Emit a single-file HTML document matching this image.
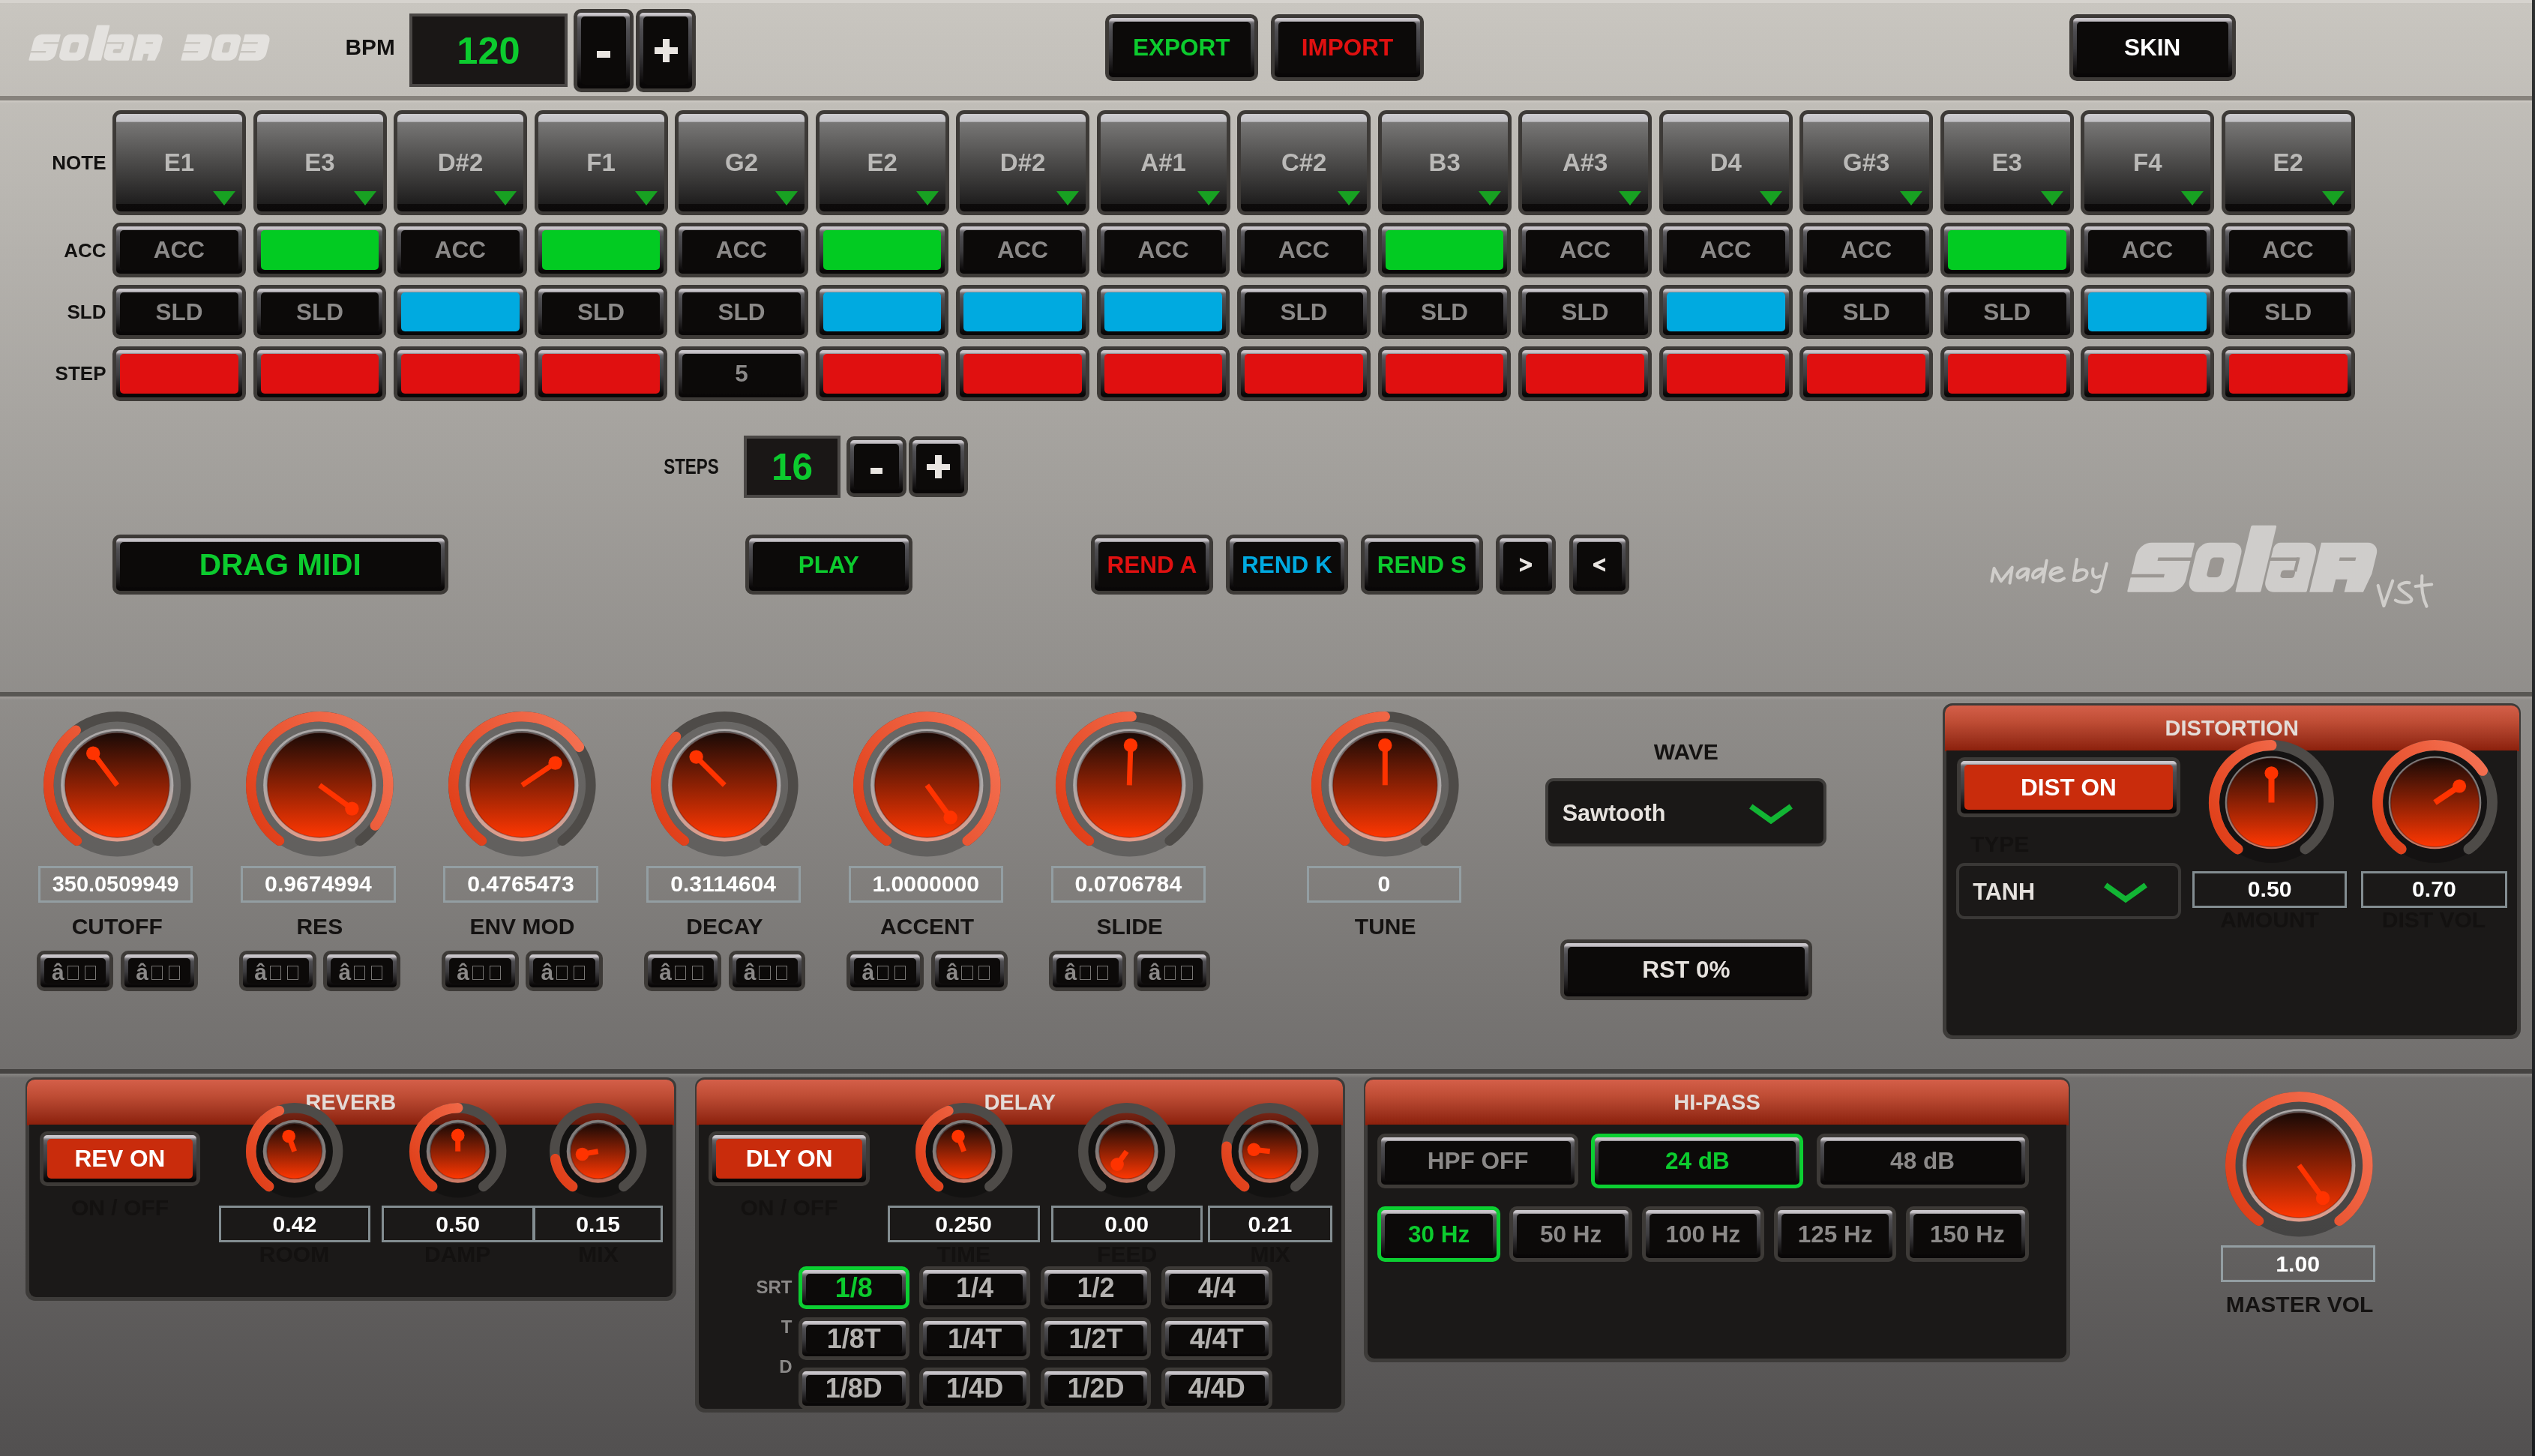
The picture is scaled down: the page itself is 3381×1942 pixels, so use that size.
<!DOCTYPE html><html><head><meta charset="utf-8"><title>solar 303</title><style>
*{margin:0;padding:0;box-sizing:border-box}
html,body{width:3381px;height:1942px;overflow:hidden;background:#525050}
body{font-family:"Liberation Sans",sans-serif;font-weight:bold;position:relative;
background:linear-gradient(180deg,#c9c6c0 0,#525050 100%)}
.a{position:absolute}
.sep{position:absolute;left:0;width:3377px}
.b{position:absolute;border:5px solid #3d3a37;border-radius:10px;
background:linear-gradient(180deg,#cdcacf 0,#c6c2c7 3.3px,#8a878b 5px,#656468 7px,#4e4d51 22%,#3d3c3f 52%,#1b191a 80%,#090707 94%)}
.b>i{position:absolute;left:5px;top:5px;right:5px;bottom:5px;border-radius:5px;background:#0c0a09;
display:flex;align-items:center;justify-content:center;font-style:normal;font-size:31.5px;color:#8b8988;white-space:nowrap;padding-top:1px}
.b.on{border-color:#0ccf32}
.n{position:absolute;width:178px;height:140.4px;top:147px;border:5.5px solid #3d3a37;border-radius:11px;
background:linear-gradient(180deg,#cdccd0 0,#c2c1c5 10px,#777675 11.5px,#4b4a49 50%,#1f1e1e 92%,#0d0b0b 92.6%,#0b0909 100%);
display:flex;align-items:center;justify-content:center;font-size:33px;color:#bab9b7}
.n:after{content:"";position:absolute;left:129px;top:102.8px;border-left:15.3px solid transparent;border-right:15.3px solid transparent;border-top:19.5px solid #18a122}
.l{position:absolute;color:#121110;font-size:26px;white-space:nowrap;line-height:30px;height:30px}
.lc{position:absolute;color:#141211;font-size:30px;white-space:nowrap;line-height:34px;height:34px;text-align:center}
.d{position:absolute;border:4px solid #4a4745;background:#1a1716;color:#0ccb2e;display:flex;align-items:center;justify-content:center}
.v{position:absolute;border:3.5px solid #939ea2;color:#fff;font-size:30.2px;display:flex;align-items:center;justify-content:center;height:48.5px}
.p{position:absolute;background:#3d3b39;border-radius:13px}
.p>.h{position:absolute;left:2.5px;right:2.5px;top:2.5px;height:61px;border-radius:10.5px 10.5px 0 0;
background:linear-gradient(180deg,#d45f49 0,#bf4d35 35%,#a33722 68%,#8b1f0b 100%);color:#e4dcd8;font-size:29px;text-align:center;line-height:60px}
.p>.y{position:absolute;left:5px;right:5px;bottom:5px;top:63px;border-radius:0 0 9px 9px;background:#1b1918}
.k{position:absolute;overflow:visible}
.c{position:absolute;border:4px solid #3e3c3a;border-radius:11px;background:#1a1817;color:#e6e2de;font-size:30.6px;line-height:1}
</style></head><body><svg width="0" height="0" style="position:absolute"><defs><linearGradient id="ga98l" gradientUnits="userSpaceOnUse" x1="-78.64" y1="58.98" x2="78.64" y2="-58.98"><stop offset="0" stop-color="#e03f19"/><stop offset="1" stop-color="#f47051"/></linearGradient><linearGradient id="gf98l" gradientUnits="userSpaceOnUse" x1="0" y1="-69.6" x2="0" y2="69.6"><stop offset="0" stop-color="#1a0a06"/><stop offset="1" stop-color="#ff3702"/></linearGradient><linearGradient id="gr98l" gradientUnits="userSpaceOnUse" x1="0" y1="-75.1" x2="0" y2="75.1"><stop offset="0" stop-color="#aca8a8"/><stop offset="0.5" stop-color="#aca8a8"/><stop offset="1" stop-color="#e29c8a"/></linearGradient><linearGradient id="gs98l" gradientUnits="userSpaceOnUse" x1="0" y1="-69.6" x2="0" y2="69.6"><stop offset="0" stop-color="#625e5e"/><stop offset="0.6" stop-color="#625e5e" stop-opacity="0"/></linearGradient><linearGradient id="ga83d" gradientUnits="userSpaceOnUse" x1="-66.8" y1="50.1" x2="66.8" y2="-50.1"><stop offset="0" stop-color="#e03f19"/><stop offset="1" stop-color="#f47051"/></linearGradient><linearGradient id="gf83d" gradientUnits="userSpaceOnUse" x1="0" y1="-59" x2="0" y2="59"><stop offset="0" stop-color="#1a0a06"/><stop offset="1" stop-color="#ff3702"/></linearGradient><linearGradient id="gr83d" gradientUnits="userSpaceOnUse" x1="0" y1="-61.8" x2="0" y2="61.8"><stop offset="0" stop-color="#807c7b"/><stop offset="0.5" stop-color="#807c7b"/><stop offset="1" stop-color="#d07a64"/></linearGradient><linearGradient id="gs83d" gradientUnits="userSpaceOnUse" x1="0" y1="-59" x2="0" y2="59"><stop offset="0" stop-color="#3a3636"/><stop offset="0.6" stop-color="#3a3636" stop-opacity="0"/></linearGradient><linearGradient id="ga64d" gradientUnits="userSpaceOnUse" x1="-51.76" y1="38.82" x2="51.76" y2="-38.82"><stop offset="0" stop-color="#e03f19"/><stop offset="1" stop-color="#f47051"/></linearGradient><linearGradient id="gf64d" gradientUnits="userSpaceOnUse" x1="0" y1="-36.6" x2="0" y2="36.6"><stop offset="0" stop-color="#1a0a06"/><stop offset="1" stop-color="#ff3702"/></linearGradient><linearGradient id="gr64d" gradientUnits="userSpaceOnUse" x1="0" y1="-42" x2="0" y2="42"><stop offset="0" stop-color="#807c7b"/><stop offset="0.5" stop-color="#807c7b"/><stop offset="1" stop-color="#d07a64"/></linearGradient><linearGradient id="gs64d" gradientUnits="userSpaceOnUse" x1="0" y1="-36.6" x2="0" y2="36.6"><stop offset="0" stop-color="#3a3636"/><stop offset="0.6" stop-color="#3a3636" stop-opacity="0"/></linearGradient></defs></svg><div id="w" style="position:absolute;left:0;top:0;width:3381px;height:1942px;will-change:transform"><div class="a" style="left:0;top:0;width:3377px;height:4px;background:#d6d3ce"></div><div class="a" style="left:3377px;top:0;width:4px;height:1942px;background:linear-gradient(180deg,#2f3131 0,#1b1d20 100%)"></div><div class="sep" style="top:128px;height:6px;background:#86827c"></div><div class="sep" style="top:134px;height:4px;background:linear-gradient(180deg,#cecbc5,#cecbc500)"></div><div class="sep" style="top:923px;height:6px;background:#595753"></div><div class="sep" style="top:929px;height:5px;background:linear-gradient(180deg,#a29e9a,#a29e9a00)"></div><div class="sep" style="top:1426px;height:6px;background:#454341"></div><div class="sep" style="top:1432px;height:6px;background:linear-gradient(180deg,#888684,#88868400)"></div><div class="l" style="left:460.6px;top:48px;font-size:29.8px;line-height:30px">BPM</div><div class="d" style="left:546px;top:18px;width:211px;height:98px;font-size:50.5px">120</div><div class="b" style="left:765px;top:12px;width:80px;height:110.5px"><i><s style="display:block;width:17.5px;height:9px;background:#e9e5e1;margin-top:10px"></s></i></div><div class="b" style="left:848px;top:12px;width:80px;height:110.5px"><i><s style="display:block;position:relative;width:31px;height:31px"><s style="position:absolute;left:0;top:11.0px;width:31px;height:9px;background:#e9e5e1"></s><s style="position:absolute;top:0;left:11.0px;height:31px;width:9px;background:#e9e5e1"></s></s></i></div><div class="b" style="left:1473.7px;top:19px;width:204px;height:88.5px"><i style="color:#0ccb2e;">EXPORT</i></div><div class="b" style="left:1695px;top:19px;width:204px;height:88.5px"><i style="color:#e01010;">IMPORT</i></div><div class="b" style="left:2759.5px;top:19px;width:222.5px;height:88.5px"><i style="color:#fff;">SKIN</i></div><div class="l" style="right:3239.5px;top:202px">NOTE</div><div class="l" style="right:3239.5px;top:318.5px">ACC</div><div class="l" style="right:3239.5px;top:401px">SLD</div><div class="l" style="right:3239.5px;top:483.3px">STEP</div><div class="n" style="left:150px">E1</div><div class="n" style="left:337.52px">E3</div><div class="n" style="left:525.04px">D#2</div><div class="n" style="left:712.56px">F1</div><div class="n" style="left:900.08px">G2</div><div class="n" style="left:1087.6px">E2</div><div class="n" style="left:1275.12px">D#2</div><div class="n" style="left:1462.64px">A#1</div><div class="n" style="left:1650.16px">C#2</div><div class="n" style="left:1837.68px">B3</div><div class="n" style="left:2025.2px">A#3</div><div class="n" style="left:2212.72px">D4</div><div class="n" style="left:2400.24px">G#3</div><div class="n" style="left:2587.76px">E3</div><div class="n" style="left:2775.28px">F4</div><div class="n" style="left:2962.8px">E2</div><div class="b" style="left:150px;top:297.2px;width:177.8px;height:72.6px"><i>ACC</i></div><div class="b" style="left:150px;top:379.7px;width:177.8px;height:72.6px"><i>SLD</i></div><div class="b" style="left:150px;top:462.1px;width:177.8px;height:72.6px"><i style="background:#e01010;"></i></div><div class="b" style="left:337.52px;top:297.2px;width:177.8px;height:72.6px"><i style="background:#02cb22;"></i></div><div class="b" style="left:337.52px;top:379.7px;width:177.8px;height:72.6px"><i>SLD</i></div><div class="b" style="left:337.52px;top:462.1px;width:177.8px;height:72.6px"><i style="background:#e01010;"></i></div><div class="b" style="left:525.04px;top:297.2px;width:177.8px;height:72.6px"><i>ACC</i></div><div class="b" style="left:525.04px;top:379.7px;width:177.8px;height:72.6px"><i style="background:#00aae0;"></i></div><div class="b" style="left:525.04px;top:462.1px;width:177.8px;height:72.6px"><i style="background:#e01010;"></i></div><div class="b" style="left:712.56px;top:297.2px;width:177.8px;height:72.6px"><i style="background:#02cb22;"></i></div><div class="b" style="left:712.56px;top:379.7px;width:177.8px;height:72.6px"><i>SLD</i></div><div class="b" style="left:712.56px;top:462.1px;width:177.8px;height:72.6px"><i style="background:#e01010;"></i></div><div class="b" style="left:900.08px;top:297.2px;width:177.8px;height:72.6px"><i>ACC</i></div><div class="b" style="left:900.08px;top:379.7px;width:177.8px;height:72.6px"><i>SLD</i></div><div class="b" style="left:900.08px;top:462.1px;width:177.8px;height:72.6px"><i>5</i></div><div class="b" style="left:1087.6px;top:297.2px;width:177.8px;height:72.6px"><i style="background:#02cb22;"></i></div><div class="b" style="left:1087.6px;top:379.7px;width:177.8px;height:72.6px"><i style="background:#00aae0;"></i></div><div class="b" style="left:1087.6px;top:462.1px;width:177.8px;height:72.6px"><i style="background:#e01010;"></i></div><div class="b" style="left:1275.12px;top:297.2px;width:177.8px;height:72.6px"><i>ACC</i></div><div class="b" style="left:1275.12px;top:379.7px;width:177.8px;height:72.6px"><i style="background:#00aae0;"></i></div><div class="b" style="left:1275.12px;top:462.1px;width:177.8px;height:72.6px"><i style="background:#e01010;"></i></div><div class="b" style="left:1462.64px;top:297.2px;width:177.8px;height:72.6px"><i>ACC</i></div><div class="b" style="left:1462.64px;top:379.7px;width:177.8px;height:72.6px"><i style="background:#00aae0;"></i></div><div class="b" style="left:1462.64px;top:462.1px;width:177.8px;height:72.6px"><i style="background:#e01010;"></i></div><div class="b" style="left:1650.16px;top:297.2px;width:177.8px;height:72.6px"><i>ACC</i></div><div class="b" style="left:1650.16px;top:379.7px;width:177.8px;height:72.6px"><i>SLD</i></div><div class="b" style="left:1650.16px;top:462.1px;width:177.8px;height:72.6px"><i style="background:#e01010;"></i></div><div class="b" style="left:1837.68px;top:297.2px;width:177.8px;height:72.6px"><i style="background:#02cb22;"></i></div><div class="b" style="left:1837.68px;top:379.7px;width:177.8px;height:72.6px"><i>SLD</i></div><div class="b" style="left:1837.68px;top:462.1px;width:177.8px;height:72.6px"><i style="background:#e01010;"></i></div><div class="b" style="left:2025.2px;top:297.2px;width:177.8px;height:72.6px"><i>ACC</i></div><div class="b" style="left:2025.2px;top:379.7px;width:177.8px;height:72.6px"><i>SLD</i></div><div class="b" style="left:2025.2px;top:462.1px;width:177.8px;height:72.6px"><i style="background:#e01010;"></i></div><div class="b" style="left:2212.72px;top:297.2px;width:177.8px;height:72.6px"><i>ACC</i></div><div class="b" style="left:2212.72px;top:379.7px;width:177.8px;height:72.6px"><i style="background:#00aae0;"></i></div><div class="b" style="left:2212.72px;top:462.1px;width:177.8px;height:72.6px"><i style="background:#e01010;"></i></div><div class="b" style="left:2400.24px;top:297.2px;width:177.8px;height:72.6px"><i>ACC</i></div><div class="b" style="left:2400.24px;top:379.7px;width:177.8px;height:72.6px"><i>SLD</i></div><div class="b" style="left:2400.24px;top:462.1px;width:177.8px;height:72.6px"><i style="background:#e01010;"></i></div><div class="b" style="left:2587.76px;top:297.2px;width:177.8px;height:72.6px"><i style="background:#02cb22;"></i></div><div class="b" style="left:2587.76px;top:379.7px;width:177.8px;height:72.6px"><i>SLD</i></div><div class="b" style="left:2587.76px;top:462.1px;width:177.8px;height:72.6px"><i style="background:#e01010;"></i></div><div class="b" style="left:2775.28px;top:297.2px;width:177.8px;height:72.6px"><i>ACC</i></div><div class="b" style="left:2775.28px;top:379.7px;width:177.8px;height:72.6px"><i style="background:#00aae0;"></i></div><div class="b" style="left:2775.28px;top:462.1px;width:177.8px;height:72.6px"><i style="background:#e01010;"></i></div><div class="b" style="left:2962.8px;top:297.2px;width:177.8px;height:72.6px"><i>ACC</i></div><div class="b" style="left:2962.8px;top:379.7px;width:177.8px;height:72.6px"><i>SLD</i></div><div class="b" style="left:2962.8px;top:462.1px;width:177.8px;height:72.6px"><i style="background:#e01010;"></i></div><div class="l" style="left:872.5px;top:606.5px;font-size:29px;width:98px;text-align:center;transform:scaleX(.775)">STEPS</div><div class="d" style="left:992px;top:581.2px;width:129px;height:82.6px;font-size:49.5px">16</div><div class="b" style="left:1129px;top:582px;width:79.5px;height:80.5px"><i><s style="display:block;width:16.5px;height:8.5px;background:#e9e5e1;margin-top:10px"></s></i></div><div class="b" style="left:1211.7px;top:582px;width:79.8px;height:80.5px"><i><s style="display:block;position:relative;width:31px;height:31px"><s style="position:absolute;left:0;top:11.25px;width:31px;height:8.5px;background:#e9e5e1"></s><s style="position:absolute;top:0;left:11.25px;height:31px;width:8.5px;background:#e9e5e1"></s></s></i></div><div class="b" style="left:149.5px;top:713.3px;width:448.5px;height:80.2px"><i style="color:#0ccb2e;font-size:40.5px;">DRAG MIDI</i></div><div class="b" style="left:993.9px;top:713.3px;width:222.7px;height:80.2px"><i style="color:#0ccb2e;">PLAY</i></div><div class="b" style="left:1455px;top:713.3px;width:162.8px;height:80.2px"><i style="color:#e01010;">REND A</i></div><div class="b" style="left:1634.9px;top:713.3px;width:162.8px;height:80.2px"><i style="color:#00aae0;">REND K</i></div><div class="b" style="left:1814.8px;top:713.3px;width:162.8px;height:80.2px"><i style="color:#0ccb2e;">REND S</i></div><div class="b" style="left:1994.6px;top:713.3px;width:80.4px;height:80.2px"><i style="padding-top:0px;"><svg width="16.5" height="18.7" viewBox="0 0 16.5 18.7" style="display:block"><path d="M0 0L16.5 7.4V11.3L0 18.7V14.3L10.4 9.35L0 4.4Z" fill="#e9e5e1"/></svg></i></div><div class="b" style="left:2092.7px;top:713.3px;width:80.4px;height:80.2px"><i style="padding-top:0px;"><svg width="16.5" height="18.7" viewBox="0 0 16.5 18.7" style="display:block"><path d="M16.5 0L0 7.4V11.3L16.5 18.7V14.3L6.1 9.35L16.5 4.4Z" fill="#e9e5e1"/></svg></i></div><svg class="k" style="left:55.9px;top:947.3px" width="200.6" height="200.6" viewBox="-100.3 -100.3 200.6 200.6"><circle r="95.3" fill="rgba(0,0,0,0.255)"/><path d="M-53.81 74.07A91.55 91.55 0 1 1 53.81 74.07" fill="none" stroke="#4e4b48" stroke-width="13.5" stroke-linecap="round"/><path d="M-53.81 74.07A91.55 91.55 0 0 1 -55.1 -73.12" fill="none" stroke="url(#ga98l)" stroke-width="13.5" stroke-linecap="round"/><circle r="75.1" fill="url(#gr98l)"/><circle r="72.2" fill="url(#gs98l)"/><circle r="69.6" fill="url(#gf98l)" stroke="rgba(60,10,0,.35)" stroke-width="1.6"/><path d="M0 0L-32.08 -42.57" stroke="#ff3300" stroke-width="7"/><circle cx="-32.08" cy="-42.57" r="9.2" fill="#ff3300"/></svg><div class="v" style="left:51.2px;top:1155px;width:206.3px;height:48.5px"><span style="display:block;transform:scaleX(.957)">350.0509949</span></div><div class="lc" style="left:-43.8px;width:400px;top:1218.5px">CUTOFF</div><div class="b" style="left:48.9px;top:1268.3px;width:102.6px;height:53.5px"><i style="font-size:30px;padding-top:4px;">&acirc;<s style="display:inline-block;width:15.2px;height:19px;border:1.4px solid #777573;margin:0 3.6px 0 4px;vertical-align:0"></s><s style="display:inline-block;width:15.2px;height:19px;border:1.4px solid #777573;margin:0 3.6px 0 4px;vertical-align:0"></s></i></div><div class="b" style="left:161.2px;top:1268.3px;width:102.6px;height:53.5px"><i style="font-size:30px;padding-top:4px;">&acirc;<s style="display:inline-block;width:15.2px;height:19px;border:1.4px solid #777573;margin:0 3.6px 0 4px;vertical-align:0"></s><s style="display:inline-block;width:15.2px;height:19px;border:1.4px solid #777573;margin:0 3.6px 0 4px;vertical-align:0"></s></i></div><svg class="k" style="left:326px;top:947.3px" width="200.6" height="200.6" viewBox="-100.3 -100.3 200.6 200.6"><circle r="95.3" fill="rgba(0,0,0,0.255)"/><path d="M-53.81 74.07A91.55 91.55 0 1 1 53.81 74.07" fill="none" stroke="#4e4b48" stroke-width="13.5" stroke-linecap="round"/><path d="M-53.81 74.07A91.55 91.55 0 1 1 74.07 53.81" fill="none" stroke="url(#ga98l)" stroke-width="13.5" stroke-linecap="round"/><circle r="75.1" fill="url(#gr98l)"/><circle r="72.2" fill="url(#gs98l)"/><circle r="69.6" fill="url(#gf98l)" stroke="rgba(60,10,0,.35)" stroke-width="1.6"/><path d="M0 0L43.12 31.33" stroke="#ff3300" stroke-width="7"/><circle cx="43.12" cy="31.33" r="9.2" fill="#ff3300"/></svg><div class="v" style="left:321.3px;top:1155px;width:206.3px;height:48.5px">0.9674994</div><div class="lc" style="left:226.3px;width:400px;top:1218.5px">RES</div><div class="b" style="left:319px;top:1268.3px;width:102.6px;height:53.5px"><i style="font-size:30px;padding-top:4px;">&acirc;<s style="display:inline-block;width:15.2px;height:19px;border:1.4px solid #777573;margin:0 3.6px 0 4px;vertical-align:0"></s><s style="display:inline-block;width:15.2px;height:19px;border:1.4px solid #777573;margin:0 3.6px 0 4px;vertical-align:0"></s></i></div><div class="b" style="left:431.3px;top:1268.3px;width:102.6px;height:53.5px"><i style="font-size:30px;padding-top:4px;">&acirc;<s style="display:inline-block;width:15.2px;height:19px;border:1.4px solid #777573;margin:0 3.6px 0 4px;vertical-align:0"></s><s style="display:inline-block;width:15.2px;height:19px;border:1.4px solid #777573;margin:0 3.6px 0 4px;vertical-align:0"></s></i></div><svg class="k" style="left:596.1px;top:947.3px" width="200.6" height="200.6" viewBox="-100.3 -100.3 200.6 200.6"><circle r="95.3" fill="rgba(0,0,0,0.255)"/><path d="M-53.81 74.07A91.55 91.55 0 1 1 53.81 74.07" fill="none" stroke="#4e4b48" stroke-width="13.5" stroke-linecap="round"/><path d="M-53.81 74.07A91.55 91.55 0 1 1 76.08 -50.93" fill="none" stroke="url(#ga98l)" stroke-width="13.5" stroke-linecap="round"/><circle r="75.1" fill="url(#gr98l)"/><circle r="72.2" fill="url(#gs98l)"/><circle r="69.6" fill="url(#gf98l)" stroke="rgba(60,10,0,.35)" stroke-width="1.6"/><path d="M0 0L44.29 -29.65" stroke="#ff3300" stroke-width="7"/><circle cx="44.29" cy="-29.65" r="9.2" fill="#ff3300"/></svg><div class="v" style="left:591.4px;top:1155px;width:206.3px;height:48.5px">0.4765473</div><div class="lc" style="left:496.4px;width:400px;top:1218.5px">ENV MOD</div><div class="b" style="left:589.1px;top:1268.3px;width:102.6px;height:53.5px"><i style="font-size:30px;padding-top:4px;">&acirc;<s style="display:inline-block;width:15.2px;height:19px;border:1.4px solid #777573;margin:0 3.6px 0 4px;vertical-align:0"></s><s style="display:inline-block;width:15.2px;height:19px;border:1.4px solid #777573;margin:0 3.6px 0 4px;vertical-align:0"></s></i></div><div class="b" style="left:701.4px;top:1268.3px;width:102.6px;height:53.5px"><i style="font-size:30px;padding-top:4px;">&acirc;<s style="display:inline-block;width:15.2px;height:19px;border:1.4px solid #777573;margin:0 3.6px 0 4px;vertical-align:0"></s><s style="display:inline-block;width:15.2px;height:19px;border:1.4px solid #777573;margin:0 3.6px 0 4px;vertical-align:0"></s></i></div><svg class="k" style="left:866.2px;top:947.3px" width="200.6" height="200.6" viewBox="-100.3 -100.3 200.6 200.6"><circle r="95.3" fill="rgba(0,0,0,0.255)"/><path d="M-53.81 74.07A91.55 91.55 0 1 1 53.81 74.07" fill="none" stroke="#4e4b48" stroke-width="13.5" stroke-linecap="round"/><path d="M-53.81 74.07A91.55 91.55 0 0 1 -64.74 -64.74" fill="none" stroke="url(#ga98l)" stroke-width="13.5" stroke-linecap="round"/><circle r="75.1" fill="url(#gr98l)"/><circle r="72.2" fill="url(#gs98l)"/><circle r="69.6" fill="url(#gf98l)" stroke="rgba(60,10,0,.35)" stroke-width="1.6"/><path d="M0 0L-37.69 -37.69" stroke="#ff3300" stroke-width="7"/><circle cx="-37.69" cy="-37.69" r="9.2" fill="#ff3300"/></svg><div class="v" style="left:861.5px;top:1155px;width:206.3px;height:48.5px">0.3114604</div><div class="lc" style="left:766.5px;width:400px;top:1218.5px">DECAY</div><div class="b" style="left:859.2px;top:1268.3px;width:102.6px;height:53.5px"><i style="font-size:30px;padding-top:4px;">&acirc;<s style="display:inline-block;width:15.2px;height:19px;border:1.4px solid #777573;margin:0 3.6px 0 4px;vertical-align:0"></s><s style="display:inline-block;width:15.2px;height:19px;border:1.4px solid #777573;margin:0 3.6px 0 4px;vertical-align:0"></s></i></div><div class="b" style="left:971.5px;top:1268.3px;width:102.6px;height:53.5px"><i style="font-size:30px;padding-top:4px;">&acirc;<s style="display:inline-block;width:15.2px;height:19px;border:1.4px solid #777573;margin:0 3.6px 0 4px;vertical-align:0"></s><s style="display:inline-block;width:15.2px;height:19px;border:1.4px solid #777573;margin:0 3.6px 0 4px;vertical-align:0"></s></i></div><svg class="k" style="left:1136.3px;top:947.3px" width="200.6" height="200.6" viewBox="-100.3 -100.3 200.6 200.6"><circle r="95.3" fill="rgba(0,0,0,0.255)"/><path d="M-53.81 74.07A91.55 91.55 0 1 1 53.81 74.07" fill="none" stroke="#4e4b48" stroke-width="13.5" stroke-linecap="round"/><path d="M-53.81 74.07A91.55 91.55 0 1 1 53.81 74.07" fill="none" stroke="url(#ga98l)" stroke-width="13.5" stroke-linecap="round"/><circle r="75.1" fill="url(#gr98l)"/><circle r="72.2" fill="url(#gs98l)"/><circle r="69.6" fill="url(#gf98l)" stroke="rgba(60,10,0,.35)" stroke-width="1.6"/><path d="M0 0L31.33 43.12" stroke="#ff3300" stroke-width="7"/><circle cx="31.33" cy="43.12" r="9.2" fill="#ff3300"/></svg><div class="v" style="left:1131.6px;top:1155px;width:206.3px;height:48.5px">1.0000000</div><div class="lc" style="left:1036.6px;width:400px;top:1218.5px">ACCENT</div><div class="b" style="left:1129.3px;top:1268.3px;width:102.6px;height:53.5px"><i style="font-size:30px;padding-top:4px;">&acirc;<s style="display:inline-block;width:15.2px;height:19px;border:1.4px solid #777573;margin:0 3.6px 0 4px;vertical-align:0"></s><s style="display:inline-block;width:15.2px;height:19px;border:1.4px solid #777573;margin:0 3.6px 0 4px;vertical-align:0"></s></i></div><div class="b" style="left:1241.6px;top:1268.3px;width:102.6px;height:53.5px"><i style="font-size:30px;padding-top:4px;">&acirc;<s style="display:inline-block;width:15.2px;height:19px;border:1.4px solid #777573;margin:0 3.6px 0 4px;vertical-align:0"></s><s style="display:inline-block;width:15.2px;height:19px;border:1.4px solid #777573;margin:0 3.6px 0 4px;vertical-align:0"></s></i></div><svg class="k" style="left:1406.4px;top:947.3px" width="200.6" height="200.6" viewBox="-100.3 -100.3 200.6 200.6"><circle r="95.3" fill="rgba(0,0,0,0.255)"/><path d="M-53.81 74.07A91.55 91.55 0 1 1 53.81 74.07" fill="none" stroke="#4e4b48" stroke-width="13.5" stroke-linecap="round"/><path d="M-53.81 74.07A91.55 91.55 0 0 1 2.88 -91.5" fill="none" stroke="url(#ga98l)" stroke-width="13.5" stroke-linecap="round"/><circle r="75.1" fill="url(#gr98l)"/><circle r="72.2" fill="url(#gs98l)"/><circle r="69.6" fill="url(#gf98l)" stroke="rgba(60,10,0,.35)" stroke-width="1.6"/><path d="M0 0L1.67 -53.27" stroke="#ff3300" stroke-width="7"/><circle cx="1.67" cy="-53.27" r="9.2" fill="#ff3300"/></svg><div class="v" style="left:1401.7px;top:1155px;width:206.3px;height:48.5px">0.0706784</div><div class="lc" style="left:1306.7px;width:400px;top:1218.5px">SLIDE</div><div class="b" style="left:1399.4px;top:1268.3px;width:102.6px;height:53.5px"><i style="font-size:30px;padding-top:4px;">&acirc;<s style="display:inline-block;width:15.2px;height:19px;border:1.4px solid #777573;margin:0 3.6px 0 4px;vertical-align:0"></s><s style="display:inline-block;width:15.2px;height:19px;border:1.4px solid #777573;margin:0 3.6px 0 4px;vertical-align:0"></s></i></div><div class="b" style="left:1511.7px;top:1268.3px;width:102.6px;height:53.5px"><i style="font-size:30px;padding-top:4px;">&acirc;<s style="display:inline-block;width:15.2px;height:19px;border:1.4px solid #777573;margin:0 3.6px 0 4px;vertical-align:0"></s><s style="display:inline-block;width:15.2px;height:19px;border:1.4px solid #777573;margin:0 3.6px 0 4px;vertical-align:0"></s></i></div><svg class="k" style="left:1747.4px;top:947.3px" width="200.6" height="200.6" viewBox="-100.3 -100.3 200.6 200.6"><circle r="95.3" fill="rgba(0,0,0,0.255)"/><path d="M-53.81 74.07A91.55 91.55 0 1 1 53.81 74.07" fill="none" stroke="#4e4b48" stroke-width="13.5" stroke-linecap="round"/><path d="M-53.81 74.07A91.55 91.55 0 0 1 0 -91.55" fill="none" stroke="url(#ga98l)" stroke-width="13.5" stroke-linecap="round"/><circle r="75.1" fill="url(#gr98l)"/><circle r="72.2" fill="url(#gs98l)"/><circle r="69.6" fill="url(#gf98l)" stroke="rgba(60,10,0,.35)" stroke-width="1.6"/><path d="M0 0L0 -53.3" stroke="#ff3300" stroke-width="7"/><circle cx="0" cy="-53.3" r="9.2" fill="#ff3300"/></svg><div class="v" style="left:1742.8px;top:1155px;width:206.3px;height:48.5px">0</div><div class="lc" style="left:1647.7px;width:400px;top:1218.5px">TUNE</div><svg class="k" style="left:2966.4px;top:1453.5px" width="200.6" height="200.6" viewBox="-100.3 -100.3 200.6 200.6"><circle r="95.3" fill="rgba(0,0,0,0.3)"/><path d="M-53.81 74.07A91.55 91.55 0 1 1 53.81 74.07" fill="none" stroke="#4e4b48" stroke-width="13.5" stroke-linecap="round"/><path d="M-53.81 74.07A91.55 91.55 0 1 1 53.81 74.07" fill="none" stroke="url(#ga98l)" stroke-width="13.5" stroke-linecap="round"/><circle r="75.1" fill="url(#gr98l)"/><circle r="72.5" fill="url(#gs98l)"/><circle r="69.9" fill="url(#gf98l)" stroke="rgba(60,10,0,.35)" stroke-width="1.6"/><path d="M0 0L31.74 43.69" stroke="#ff3300" stroke-width="7"/><circle cx="31.74" cy="43.69" r="9.2" fill="#ff3300"/></svg><div class="v" style="left:2961.5px;top:1661.3px;width:206.3px;height:48.5px">1.00</div><div class="lc" style="left:2867px;width:400px;top:1723px">MASTER VOL</div><div class="lc" style="left:2048.8px;width:400px;top:985.5px">WAVE</div><div class="c" style="left:2061.3px;top:1038px;width:375px;height:90.5px;border-color:#3e3c3a;background:#1a1817"><span class="a" style="left:18.4px;top:1.5px;bottom:0;display:flex;align-items:center">Sawtooth</span><svg class="a" style="left:265.7px;top:29.3px" width="62" height="34" viewBox="0 0 62 34"><path d="M4.2 4.6L31 23.6L57.8 4.6" fill="none" stroke="#12b534" stroke-width="7.4"/></svg></div><div class="b" style="left:2081.2px;top:1253.1px;width:335.5px;height:80.7px"><i style="color:#e6e2de;">RST 0%</i></div><div class="p" style="left:2591.2px;top:938.2px;width:771px;height:447.8px"><div class="h">DISTORTION</div><div class="y"></div></div><div class="b" style="left:2610.1px;top:1010px;width:297.7px;height:80px"><i style="color:#fff;background:#c92c0c;">DIST ON</i></div><div class="lc" style="left:2628px;top:1109px;color:#131110;text-align:left">TYPE</div><div class="c" style="left:2609px;top:1151px;width:300px;height:75px;border-color:#3a3836;background:#1b1918"><span class="a" style="left:18.3px;top:1.5px;bottom:0;display:flex;align-items:center">TANH</span><svg class="a" style="left:190.5px;top:21px" width="62" height="34" viewBox="0 0 62 34"><path d="M4.2 4.6L31 23.6L57.8 4.6" fill="none" stroke="#12b534" stroke-width="7.4"/></svg></div><svg class="k" style="left:2943.8px;top:985px" width="171" height="171" viewBox="-85.5 -85.5 171 171"><circle r="80.5" fill="rgba(0,0,0,0.25)"/><path d="M-44.97 61.89A76.5 76.5 0 1 1 44.97 61.89" fill="none" stroke="#4e4b48" stroke-width="14" stroke-linecap="round"/><path d="M-44.97 61.89A76.5 76.5 0 0 1 0 -76.5" fill="none" stroke="url(#ga83d)" stroke-width="14" stroke-linecap="round"/><circle r="61.8" fill="url(#gr83d)"/><circle r="59.7" fill="url(#gs83d)"/><circle r="59" fill="url(#gf83d)" stroke="rgba(60,10,0,.35)" stroke-width="1.6"/><path d="M0 0L0 -39.3" stroke="#ff3300" stroke-width="8"/><circle cx="0" cy="-39.3" r="9" fill="#ff3300"/></svg><svg class="k" style="left:3161.9px;top:985px" width="171" height="171" viewBox="-85.5 -85.5 171 171"><circle r="80.5" fill="rgba(0,0,0,0.25)"/><path d="M-44.97 61.89A76.5 76.5 0 1 1 44.97 61.89" fill="none" stroke="#4e4b48" stroke-width="14" stroke-linecap="round"/><path d="M-44.97 61.89A76.5 76.5 0 1 1 63.5 -42.67" fill="none" stroke="url(#ga83d)" stroke-width="14" stroke-linecap="round"/><circle r="61.8" fill="url(#gr83d)"/><circle r="59.7" fill="url(#gs83d)"/><circle r="59" fill="url(#gf83d)" stroke="rgba(60,10,0,.35)" stroke-width="1.6"/><path d="M0 0L32.62 -21.92" stroke="#ff3300" stroke-width="8"/><circle cx="32.62" cy="-21.92" r="9" fill="#ff3300"/></svg><div class="v" style="left:2924.2px;top:1161.9px;width:206px;height:49px;border-color:#838d91">0.50</div><div class="v" style="left:3148.8px;top:1161.9px;width:195.2px;height:49px;border-color:#838d91">0.70</div><div class="lc" style="left:2827px;width:400px;top:1210px;color:#131110">AMOUNT</div><div class="lc" style="left:3046px;width:400px;top:1210px;color:#131110">DIST VOL</div><div class="p" style="left:33.7px;top:1437.2px;width:868px;height:298px"><div class="h">REVERB</div><div class="y"></div></div><div class="b" style="left:52.6px;top:1508.5px;width:214.7px;height:73px"><i style="color:#fff;background:#c92c0c;">REV ON</i></div><div class="lc" style="left:-40px;width:400px;top:1594px;color:#131110">ON / OFF</div><svg class="k" style="left:325.8px;top:1468.8px" width="133.4" height="133.4" viewBox="-66.7 -66.7 133.4 133.4"><circle r="61.7" fill="rgba(0,0,0,0.27)"/><path d="M-34.06 46.88A57.95 57.95 0 1 1 34.06 46.88" fill="none" stroke="#4e4b48" stroke-width="13.5" stroke-linecap="round"/><path d="M-34.06 46.88A57.95 57.95 0 0 1 -20.29 -54.28" fill="none" stroke="url(#ga64d)" stroke-width="13.5" stroke-linecap="round"/><circle r="42" fill="url(#gr64d)"/><circle r="38.4" fill="url(#gs64d)"/><circle r="36.6" fill="url(#gf64d)" stroke="rgba(60,10,0,.35)" stroke-width="1.6"/><path d="M0 0L-7.53 -20.14" stroke="#ff3300" stroke-width="7"/><circle cx="-7.53" cy="-20.14" r="8.8" fill="#ff3300"/></svg><svg class="k" style="left:543.5px;top:1468.8px" width="133.4" height="133.4" viewBox="-66.7 -66.7 133.4 133.4"><circle r="61.7" fill="rgba(0,0,0,0.27)"/><path d="M-34.06 46.88A57.95 57.95 0 1 1 34.06 46.88" fill="none" stroke="#4e4b48" stroke-width="13.5" stroke-linecap="round"/><path d="M-34.06 46.88A57.95 57.95 0 0 1 0 -57.95" fill="none" stroke="url(#ga64d)" stroke-width="13.5" stroke-linecap="round"/><circle r="42" fill="url(#gr64d)"/><circle r="38.4" fill="url(#gs64d)"/><circle r="36.6" fill="url(#gf64d)" stroke="rgba(60,10,0,.35)" stroke-width="1.6"/><path d="M0 0L0 -21.5" stroke="#ff3300" stroke-width="7"/><circle cx="0" cy="-21.5" r="8.8" fill="#ff3300"/></svg><svg class="k" style="left:731.3px;top:1468.8px" width="133.4" height="133.4" viewBox="-66.7 -66.7 133.4 133.4"><circle r="61.7" fill="rgba(0,0,0,0.27)"/><path d="M-34.06 46.88A57.95 57.95 0 1 1 34.06 46.88" fill="none" stroke="#4e4b48" stroke-width="13.5" stroke-linecap="round"/><path d="M-34.06 46.88A57.95 57.95 0 0 1 -57.07 10.06" fill="none" stroke="url(#ga64d)" stroke-width="13.5" stroke-linecap="round"/><circle r="42" fill="url(#gr64d)"/><circle r="38.4" fill="url(#gs64d)"/><circle r="36.6" fill="url(#gf64d)" stroke="rgba(60,10,0,.35)" stroke-width="1.6"/><path d="M0 0L-21.17 3.73" stroke="#ff3300" stroke-width="7"/><circle cx="-21.17" cy="3.73" r="8.8" fill="#ff3300"/></svg><div class="v" style="left:291.5px;top:1608.3px;width:202.7px;height:49px;border-color:#838d91">0.42</div><div class="v" style="left:508.7px;top:1608.3px;width:204px;height:49px;border-color:#838d91">0.50</div><div class="v" style="left:711px;top:1608.3px;width:173.2px;height:49px;border-color:#838d91">0.15</div><div class="lc" style="left:192.5px;width:400px;top:1655.5px;color:#131110">ROOM</div><div class="lc" style="left:410.2px;width:400px;top:1655.5px;color:#131110">DAMP</div><div class="lc" style="left:598px;width:400px;top:1655.5px;color:#131110">MIX</div><div class="p" style="left:926.8px;top:1437.2px;width:866.8px;height:446.8px"><div class="h">DELAY</div><div class="y"></div></div><div class="b" style="left:945.4px;top:1508.5px;width:214.5px;height:73px"><i style="color:#fff;background:#c92c0c;">DLY ON</i></div><div class="lc" style="left:852.5px;width:400px;top:1594px;color:#131110">ON / OFF</div><svg class="k" style="left:1218.6px;top:1468.8px" width="133.4" height="133.4" viewBox="-66.7 -66.7 133.4 133.4"><circle r="61.7" fill="rgba(0,0,0,0.27)"/><path d="M-34.06 46.88A57.95 57.95 0 1 1 34.06 46.88" fill="none" stroke="#4e4b48" stroke-width="13.5" stroke-linecap="round"/><path d="M-34.06 46.88A57.95 57.95 0 0 1 -20.77 -54.1" fill="none" stroke="url(#ga64d)" stroke-width="13.5" stroke-linecap="round"/><circle r="42" fill="url(#gr64d)"/><circle r="38.4" fill="url(#gs64d)"/><circle r="36.6" fill="url(#gf64d)" stroke="rgba(60,10,0,.35)" stroke-width="1.6"/><path d="M0 0L-7.7 -20.07" stroke="#ff3300" stroke-width="7"/><circle cx="-7.7" cy="-20.07" r="8.8" fill="#ff3300"/></svg><svg class="k" style="left:1436.4px;top:1468.8px" width="133.4" height="133.4" viewBox="-66.7 -66.7 133.4 133.4"><circle r="61.7" fill="rgba(0,0,0,0.27)"/><path d="M-34.06 46.88A57.95 57.95 0 1 1 34.06 46.88" fill="none" stroke="#4e4b48" stroke-width="13.5" stroke-linecap="round"/><circle r="42" fill="url(#gr64d)"/><circle r="38.4" fill="url(#gs64d)"/><circle r="36.6" fill="url(#gf64d)" stroke="rgba(60,10,0,.35)" stroke-width="1.6"/><path d="M0 0L-12.64 17.39" stroke="#ff3300" stroke-width="7"/><circle cx="-12.64" cy="17.39" r="8.8" fill="#ff3300"/></svg><svg class="k" style="left:1627.4px;top:1468.8px" width="133.4" height="133.4" viewBox="-66.7 -66.7 133.4 133.4"><circle r="61.7" fill="rgba(0,0,0,0.27)"/><path d="M-34.06 46.88A57.95 57.95 0 1 1 34.06 46.88" fill="none" stroke="#4e4b48" stroke-width="13.5" stroke-linecap="round"/><path d="M-34.06 46.88A57.95 57.95 0 0 1 -57.58 -6.56" fill="none" stroke="url(#ga64d)" stroke-width="13.5" stroke-linecap="round"/><circle r="42" fill="url(#gr64d)"/><circle r="38.4" fill="url(#gs64d)"/><circle r="36.6" fill="url(#gf64d)" stroke="rgba(60,10,0,.35)" stroke-width="1.6"/><path d="M0 0L-21.36 -2.43" stroke="#ff3300" stroke-width="7"/><circle cx="-21.36" cy="-2.43" r="8.8" fill="#ff3300"/></svg><div class="v" style="left:1183.7px;top:1608.3px;width:202.9px;height:49px;border-color:#838d91">0.250</div><div class="v" style="left:1401.5px;top:1608.3px;width:202.2px;height:49px;border-color:#838d91">0.00</div><div class="v" style="left:1611.1px;top:1608.3px;width:165.7px;height:49px;border-color:#838d91">0.21</div><div class="lc" style="left:1085.3px;width:400px;top:1655.5px;color:#131110">TIME</div><div class="lc" style="left:1303.1px;width:400px;top:1655.5px;color:#131110">FEED</div><div class="lc" style="left:1494.1px;width:400px;top:1655.5px;color:#131110">MIX</div><div class="l" style="right:2324.5px;top:1702.2px;color:#8b8988;font-size:24px">SRT</div><div class="l" style="right:2324.5px;top:1754.7px;color:#8b8988;font-size:24px">T</div><div class="l" style="right:2324.5px;top:1807.6px;color:#8b8988;font-size:24px">D</div><div class="b on" style="left:1064.9px;top:1688.5px;width:147.8px;height:57.8px"><i style="color:#0ccb2e;font-size:36px;">1/8</i></div><div class="b" style="left:1226.23px;top:1688.5px;width:147.8px;height:57.8px"><i style="color:#b4b2b0;font-size:36px;">1/4</i></div><div class="b" style="left:1387.56px;top:1688.5px;width:147.8px;height:57.8px"><i style="color:#b4b2b0;font-size:36px;">1/2</i></div><div class="b" style="left:1548.89px;top:1688.5px;width:147.8px;height:57.8px"><i style="color:#b4b2b0;font-size:36px;">4/4</i></div><div class="b" style="left:1064.9px;top:1756.7px;width:147.8px;height:57.3px"><i style="color:#b4b2b0;font-size:36px;">1/8T</i></div><div class="b" style="left:1226.23px;top:1756.7px;width:147.8px;height:57.3px"><i style="color:#b4b2b0;font-size:36px;">1/4T</i></div><div class="b" style="left:1387.56px;top:1756.7px;width:147.8px;height:57.3px"><i style="color:#b4b2b0;font-size:36px;">1/2T</i></div><div class="b" style="left:1548.89px;top:1756.7px;width:147.8px;height:57.3px"><i style="color:#b4b2b0;font-size:36px;">4/4T</i></div><div class="b" style="left:1064.9px;top:1823.7px;width:147.8px;height:56.6px"><i style="color:#b4b2b0;font-size:36px;">1/8D</i></div><div class="b" style="left:1226.23px;top:1823.7px;width:147.8px;height:56.6px"><i style="color:#b4b2b0;font-size:36px;">1/4D</i></div><div class="b" style="left:1387.56px;top:1823.7px;width:147.8px;height:56.6px"><i style="color:#b4b2b0;font-size:36px;">1/2D</i></div><div class="b" style="left:1548.89px;top:1823.7px;width:147.8px;height:56.6px"><i style="color:#b4b2b0;font-size:36px;">4/4D</i></div><div class="p" style="left:1818.6px;top:1437.2px;width:942.8px;height:379.8px"><div class="h">HI-PASS</div><div class="y"></div></div><div class="b" style="left:1837.2px;top:1511.7px;width:268.1px;height:73.3px"><i>HPF OFF</i></div><div class="b on" style="left:2122.4px;top:1511.7px;width:283px;height:73.3px"><i style="color:#0ccb2e;">24 dB</i></div><div class="b" style="left:2422.5px;top:1511.7px;width:283px;height:73.3px"><i>48 dB</i></div><div class="b on" style="left:1837.2px;top:1609.2px;width:163.7px;height:73.8px"><i style="color:#0ccb2e;">30 Hz</i></div><div class="b" style="left:2013.4px;top:1609.2px;width:163.7px;height:73.8px"><i>50 Hz</i></div><div class="b" style="left:2189.6px;top:1609.2px;width:163.7px;height:73.8px"><i>100 Hz</i></div><div class="b" style="left:2365.8px;top:1609.2px;width:163.7px;height:73.8px"><i>125 Hz</i></div><div class="b" style="left:2542px;top:1609.2px;width:163.7px;height:73.8px"><i>150 Hz</i></div><svg class="k" style="left:0;top:0" width="3381" height="1942"><g transform="translate(38.7 80.7) scale(1.0 1.0) skewX(-14.04) translate(0 -35)"><g transform="translate(-0.5 0)"><path d="M9 0H33A1 1 0 0 1 34 1V26A9 9 0 0 1 25 35H1A1 1 0 0 1 0 34V9A9 9 0 0 1 9 0Z" fill="#e4e2df"/><rect x="13.94" y="10.5" width="21.08" height="2.3" rx="0" fill="#c7c4be"/><rect x="-1" y="22.3" width="21.08" height="2.3" rx="0" fill="#c7c4be"/></g><g transform="translate(38.6 0)"><path d="M8 0H26A8 8 0 0 1 34 8V27A8 8 0 0 1 26 35H8A8 8 0 0 1 0 27V8A8 8 0 0 1 8 0Z" fill="#e4e2df"/><rect x="11.9" y="10.5" width="10.54" height="14" rx="2.5" fill="#c7c4be"/></g><g transform="translate(78.6 0)"><rect x="0" y="-12.2" width="17.5" height="47.2" rx="1" fill="#e4e2df"/></g><g transform="translate(98 0)"><path d="M4 0H27A8 8 0 0 1 35 8V34A1 1 0 0 1 34 35H8A8 8 0 0 1 0 27V4A4 4 0 0 1 4 0Z" fill="#e4e2df"/><rect x="-1" y="10.5" width="23.1" height="2.3" rx="0" fill="#c7c4be"/><rect x="10.85" y="19.5" width="11.2" height="5.5" rx="2" fill="#c7c4be"/><rect x="20.8" y="10.5" width="2.3" height="10" rx="0" fill="#c7c4be"/></g><g transform="translate(137 0)"><path d="M0 35V0H26a8 8 0 0 1 8 8V22L31 35H20.4V26H13.6V35Z" fill="#e4e2df"/><rect x="12.92" y="10.5" width="9.52" height="2.3" rx="0" fill="#c7c4be"/></g><g transform="translate(202.5 0)"><path d="M1 0H26A9 9 0 0 1 35 9V26A9 9 0 0 1 26 35H1A1 1 0 0 1 0 34V1A1 1 0 0 1 1 0Z" fill="#e4e2df"/><rect x="-1" y="10.5" width="21" height="2.3" rx="0" fill="#c7c4be"/><rect x="-1" y="22.3" width="21" height="2.3" rx="0" fill="#c7c4be"/></g><g transform="translate(241.5 0)"><path d="M8 0H26A8 8 0 0 1 34 8V27A8 8 0 0 1 26 35H8A8 8 0 0 1 0 27V8A8 8 0 0 1 8 0Z" fill="#e4e2df"/><rect x="12.58" y="10.5" width="9.52" height="14" rx="2.5" fill="#c7c4be"/></g><g transform="translate(279.2 0)"><path d="M1 0H26A9 9 0 0 1 35 9V26A9 9 0 0 1 26 35H1A1 1 0 0 1 0 34V1A1 1 0 0 1 1 0Z" fill="#e4e2df"/><rect x="-1" y="10.5" width="21" height="2.3" rx="0" fill="#c7c4be"/><rect x="-1" y="22.3" width="21" height="2.3" rx="0" fill="#c7c4be"/></g></g></svg><svg class="k" style="left:0;top:0" width="3381" height="1942"><g transform="translate(2836.9 789.8) scale(1.886 1.886) skewX(-13.5) translate(0 -35)"><g transform="translate(0 0)"><path d="M9 0H38.5A1 1 0 0 1 39.5 1V26A9 9 0 0 1 30.5 35H1A1 1 0 0 1 0 34V9A9 9 0 0 1 9 0Z" fill="#cfcdcb"/><rect x="16.2" y="10.5" width="24.49" height="2.3" rx="0" fill="#9b9793"/><rect x="-1" y="22.3" width="24.49" height="2.3" rx="0" fill="#9b9793"/></g><g transform="translate(42.2 0)"><path d="M8 0H24A8 8 0 0 1 32 8V27A8 8 0 0 1 24 35H8A8 8 0 0 1 0 27V8A8 8 0 0 1 8 0Z" fill="#cfcdcb"/><rect x="11.2" y="10.5" width="9.92" height="14" rx="2.5" fill="#9b9793"/></g><g transform="translate(76.5 0)"><rect x="0" y="-12.2" width="18" height="47.2" rx="1" fill="#cfcdcb"/></g><g transform="translate(96 0)"><path d="M4 0H23A8 8 0 0 1 31 8V34A1 1 0 0 1 30 35H8A8 8 0 0 1 0 27V4A4 4 0 0 1 4 0Z" fill="#cfcdcb"/><rect x="-1" y="10.5" width="20.46" height="2.3" rx="0" fill="#9b9793"/><rect x="9.61" y="19.5" width="9.92" height="5.5" rx="2" fill="#9b9793"/><rect x="18.16" y="10.5" width="2.3" height="10" rx="0" fill="#9b9793"/></g><g transform="translate(129 0)"><path d="M0 35V0H33a8 8 0 0 1 8 8V22L38 35H24.6V26H16.4V35Z" fill="#cfcdcb"/><rect x="15.58" y="10.5" width="11.48" height="2.3" rx="0" fill="#9b9793"/></g></g></svg><svg class="k" style="left:0;top:0" width="3381" height="1942" fill="none" stroke="#d0cecb" stroke-linecap="round" stroke-linejoin="round"><g transform="translate(2645 735) scale(0.07102)" stroke-width="57"><path d="M160 565L205 325L335 565L545 305L500 600"/><path d="M850 345C760 300 640 380 640 455C640 545 760 500 852 350L822 545"/><path d="M1135 345C1040 310 930 390 930 462C930 545 1050 500 1142 355M1192 180L1120 580"/><path d="M1285 442L1480 372C1470 282 1300 300 1262 420C1232 540 1400 600 1520 512"/><path d="M1760 155L1700 548M1722 420C1800 330 1962 330 1950 422C1940 520 1800 572 1704 542"/><path d="M2062 335C2040 480 2100 522 2200 470M2320 235L2202 700C2180 770 2100 790 2042 742"/></g><g transform="translate(3150 750) scale(0.0515)" stroke-width="80"><path d="M420 600L570 1130L800 480"/><path d="M1230 530C1100 500 950 580 960 642C980 742 1300 880 1290 972C1280 1062 1000 1062 870 982"/><path d="M1560 350C1540 600 1560 900 1680 1140M1390 622L1810 572"/></g></svg></div></body></html>
